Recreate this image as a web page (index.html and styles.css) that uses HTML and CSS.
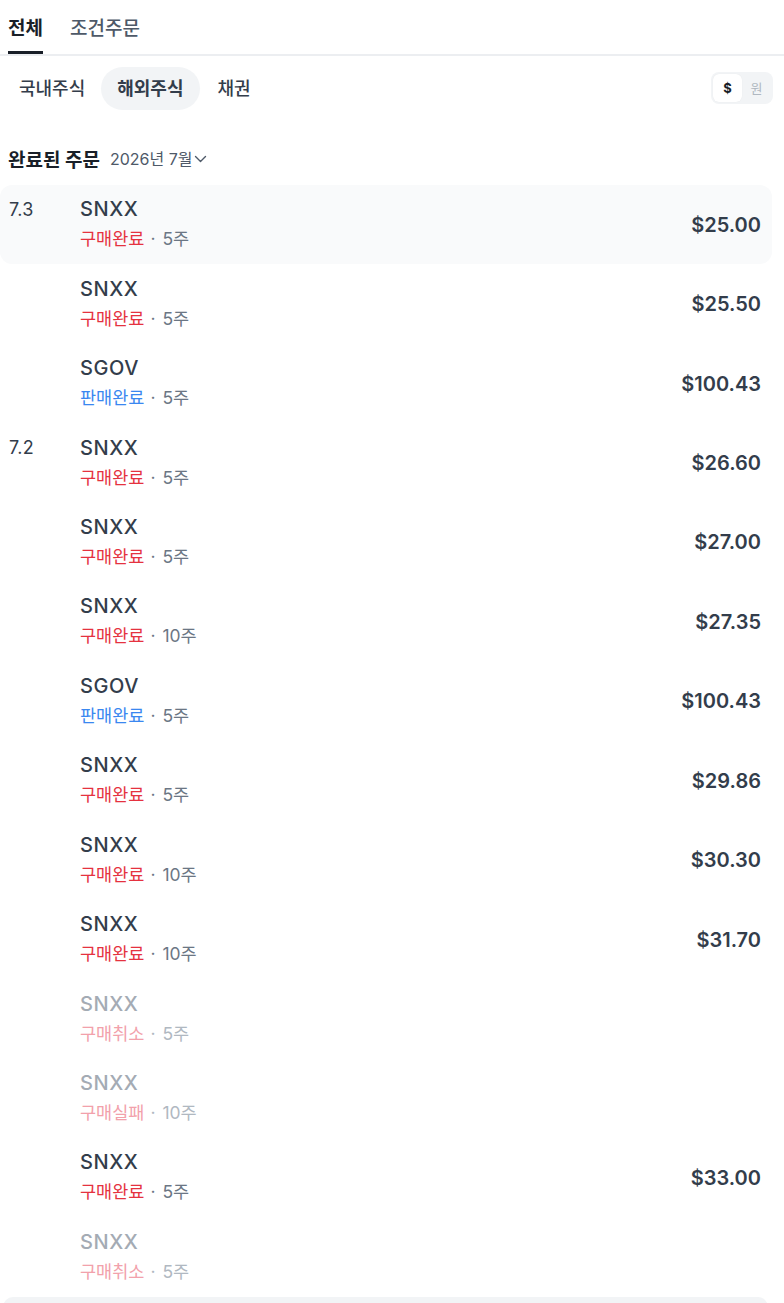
FILE: index.html
```html
<!DOCTYPE html>
<html lang="ko">
<head>
<meta charset="utf-8">
<link rel="stylesheet" href="styles.css">
</head>
<body>
<div class="page">
  <nav class="tabs">
    <div class="tab active">전체</div>
    <div class="tab">조건주문</div>
  </nav>
  <div class="filters">
    <div class="chips">
      <div class="chip">국내주식</div>
      <div class="chip selected">해외주식</div>
      <div class="chip">채권</div>
    </div>
    <div class="toggle">
      <div class="tog on">$</div>
      <div class="tog">원</div>
    </div>
  </div>
  <div class="heading">
    <span class="title">완료된 주문</span>
    <span class="month">2026년 7월</span>
    <svg class="chev" width="13" height="8" viewBox="0 0 13 8"><path d="M1.5 1.5 L6.5 6.5 L11.5 1.5" fill="none" stroke="#4e5968" stroke-width="1.4" stroke-linecap="round" stroke-linejoin="round"/></svg>
  </div>
  <div class="list">
    <div class="row hl"><div class="date">7.3</div><div class="info"><div class="name">SNXX</div><div class="status"><span class="buy">구매완료</span><span class="sep">·</span>5주</div></div><div class="price">$25.00</div></div>
    <div class="row"><div class="date"></div><div class="info"><div class="name">SNXX</div><div class="status"><span class="buy">구매완료</span><span class="sep">·</span>5주</div></div><div class="price">$25.50</div></div>
    <div class="row"><div class="date"></div><div class="info"><div class="name">SGOV</div><div class="status"><span class="sell">판매완료</span><span class="sep">·</span>5주</div></div><div class="price">$100.43</div></div>
    <div class="row"><div class="date">7.2</div><div class="info"><div class="name">SNXX</div><div class="status"><span class="buy">구매완료</span><span class="sep">·</span>5주</div></div><div class="price">$26.60</div></div>
    <div class="row"><div class="date"></div><div class="info"><div class="name">SNXX</div><div class="status"><span class="buy">구매완료</span><span class="sep">·</span>5주</div></div><div class="price">$27.00</div></div>
    <div class="row"><div class="date"></div><div class="info"><div class="name">SNXX</div><div class="status"><span class="buy">구매완료</span><span class="sep">·</span>10주</div></div><div class="price">$27.35</div></div>
    <div class="row"><div class="date"></div><div class="info"><div class="name">SGOV</div><div class="status"><span class="sell">판매완료</span><span class="sep">·</span>5주</div></div><div class="price">$100.43</div></div>
    <div class="row"><div class="date"></div><div class="info"><div class="name">SNXX</div><div class="status"><span class="buy">구매완료</span><span class="sep">·</span>5주</div></div><div class="price">$29.86</div></div>
    <div class="row"><div class="date"></div><div class="info"><div class="name">SNXX</div><div class="status"><span class="buy">구매완료</span><span class="sep">·</span>10주</div></div><div class="price">$30.30</div></div>
    <div class="row"><div class="date"></div><div class="info"><div class="name">SNXX</div><div class="status"><span class="buy">구매완료</span><span class="sep">·</span>10주</div></div><div class="price">$31.70</div></div>
    <div class="row dim"><div class="date"></div><div class="info"><div class="name">SNXX</div><div class="status"><span class="buy">구매취소</span><span class="sep">·</span>5주</div></div><div class="price"></div></div>
    <div class="row dim"><div class="date"></div><div class="info"><div class="name">SNXX</div><div class="status"><span class="buy">구매실패</span><span class="sep">·</span>10주</div></div><div class="price"></div></div>
    <div class="row"><div class="date"></div><div class="info"><div class="name">SNXX</div><div class="status"><span class="buy">구매완료</span><span class="sep">·</span>5주</div></div><div class="price">$33.00</div></div>
    <div class="row dim"><div class="date"></div><div class="info"><div class="name">SNXX</div><div class="status"><span class="buy">구매취소</span><span class="sep">·</span>5주</div></div><div class="price"></div></div>
  </div>
  <div class="bottom"></div>
</div>
</body>
</html>
```
FILE: styles.css
```css
* { box-sizing: border-box; }
html, body { margin: 0; padding: 0; background: #fff; }
body {
  font-family: Inter, "Noto Sans CJK KR", sans-serif;
  color: #333d4b;
  overflow: hidden;
}
.page { width: 784px; }
.tabs {
  display: flex;
  gap: 27px;
  padding: 0 0 0 8px;
  border-bottom: 2px solid #eceef1;
  height: 56px;
}
.tab {
  font-size: 19px;
  font-weight: 500;
  color: #4e5968;
  padding-top: 13px;
  height: 54px;
}
.tab.active {
  color: #191f28;
  font-weight: 600;
  border-bottom: 3px solid #191f28;
}
.filters {
  display: flex;
  justify-content: space-between;
  align-items: flex-start;
  padding: 11px 11px 0 3px;
  height: 65px;
}
.chips { display: flex; }
.chip {
  font-size: 18px;
  font-weight: 500;
  color: #333d4b;
  padding: 0 16px;
  height: 43px;
  line-height: 43px;
  border-radius: 22px;
}
.chip.selected { background: #f2f4f6; font-weight: 600; margin-right: 2px; }
.toggle {
  display: flex;
  background: #f2f4f6;
  border-radius: 8px;
  padding: 2px;
  height: 32px;
  margin-top: 5px;
}
.tog {
  width: 29px;
  height: 28px;
  line-height: 28px;
  text-align: center;
  font-size: 13px;
  color: #b0b8c1;
  border-radius: 6px;
}
.tog.on {
  background: #fff;
  color: #191f28;
  font-weight: 700;
  box-shadow: 0 0 1px rgba(0,0,0,0.08);
}
.heading {
  display: flex;
  align-items: center;
  padding: 10px 8px 0;
  height: 64px;
}
.title { font-size: 19px; font-weight: 700; color: #191f28; }
.month { font-size: 16px; color: #4e5968; margin-left: 10px; }
.chev { margin-left: 2px; margin-top: 1px; }
.list { width: 772px; }
.row {
  display: flex;
  align-items: center;
  height: 79.45px;
  border-radius: 12px;
  padding: 0 11px 0 9px;
}
.row.hl { background: #f9fafb; }
.date {
  width: 71px;
  align-self: flex-start;
  padding-top: 14px;
  font-size: 18px;
  letter-spacing: 0.3px;
  color: #333d4b;
}
.info { flex: 1; display: flex; flex-direction: column; gap: 5px; padding-bottom: 1px; }
.name { font-size: 20px; font-weight: 500; color: #333d4b; line-height: 25px; letter-spacing: 0.6px; }
.status { font-size: 17.5px; color: #6b7684; line-height: 24px; }
.sep { margin: 0 7px 0 6px; }
.buy { color: #e5323f; }
.sell { color: #3a87f0; }
.price { font-size: 20px; font-weight: 600; color: #333d4b; }
.dim .name { color: #a4abb4; }
.dim .status { color: #b0b8c1; }
.dim .buy { color: #f2a1ab; }
.bottom {
  margin: 0 16px 0 3px;
  height: 20px;
  background: #f2f4f6;
  border-radius: 10px 10px 0 0;
}
```
